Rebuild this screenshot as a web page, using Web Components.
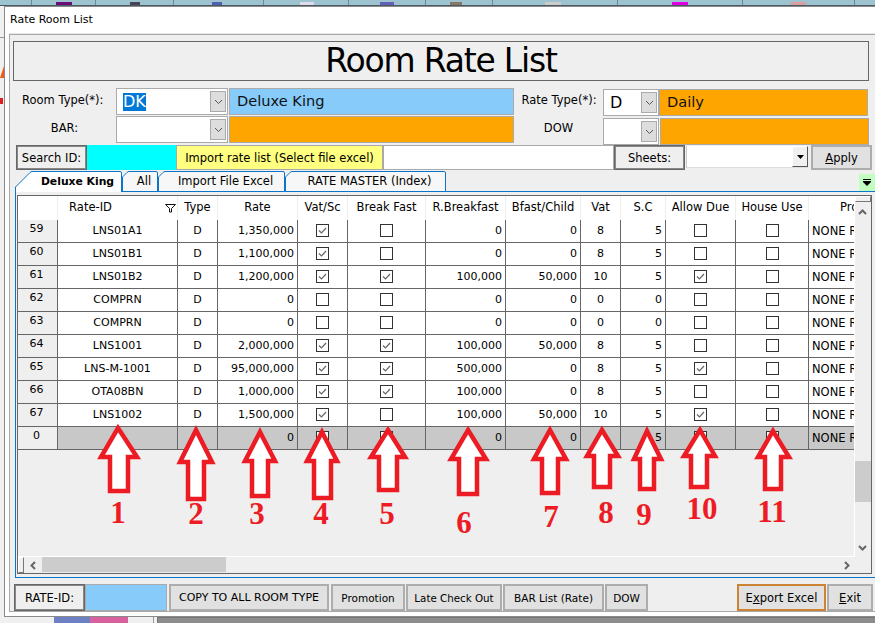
<!DOCTYPE html>
<html lang="en">
  <head>
    <meta charset="UTF-8" />
    <title>Rate Room List</title>
    <style>
      body {
        margin: 0;
        background: #f0f0f0;
      }
    </style>
  </head>

  <body>
    <rr-app>
      <rr-desktop></rr-desktop>
      <rr-window caption="Rate Room List">
        <rr-title>Room Rate List</rr-title>

        <rr-row style="height: 28px">
          <rr-label style="width: 94px; margin-left: 9px; text-align: left">Room Type(*):</rr-label>
          <rr-combo style="width: 112px; height: 27px" value="DK" selected></rr-combo>
          <rr-name style="width: 285px; height: 27px; margin-left: 1px; background: #87cbfb">Deluxe King</rr-name>
          <rr-label style="width: 88px; margin-left: 1px">Rate Type(*):</rr-label>
          <rr-combo style="width: 56px; height: 27px; margin-top: 1px" value="D"></rr-combo>
          <rr-name style="width: 209px; height: 27px; margin-top: 1px">Daily</rr-name>
        </rr-row>
        <rr-row style="height: 29px">
          <rr-label style="width: 103px">BAR:</rr-label>
          <rr-combo style="width: 112px; height: 27px"></rr-combo>
          <rr-name style="width: 285px; height: 27px; margin-left: 1px"></rr-name>
          <rr-label style="width: 89px">DOW</rr-label>
          <rr-combo style="width: 56px; height: 27px; margin-top: 2px"></rr-combo>
          <rr-name style="width: 209px; height: 27px; margin-top: 2px; margin-left: 1px"></rr-name>
        </rr-row>

        <rr-row style="height: 26px; padding-left: 3px">
          <rr-button kind="label" style="width: 71px; height: 25px">Search ID:</rr-button>
          <rr-name style="width: 89px; height: 25px; background: #00ffff; border-color: #00ffff"></rr-name>
          <rr-button kind="note" style="width: 207px; height: 25px">Import rate list (Select file excel)</rr-button>
          <rr-name style="width: 231px; height: 25px; background: #fff"></rr-name>
          <rr-button kind="label" style="width: 71px; height: 25px">Sheets:</rr-button>
          <rr-select style="width: 122px; height: 22px; margin: 1px 3px 0 1px"></rr-select>
          <rr-button style="width: 61px; height: 25px"><u>A</u>pply</rr-button>
        </rr-row>

        <rr-tabs>
          <rr-tab w="107" chamfer="15" active>Deluxe King</rr-tab>
          <rr-tab w="36" chamfer="5">All</rr-tab>
          <rr-tab w="127" chamfer="5">Import File Excel</rr-tab>
          <rr-tab w="161" chamfer="5">RATE MASTER (Index)</rr-tab>
        </rr-tabs>

        <rr-panel>
          <rr-grid></rr-grid>
        </rr-panel>

        <rr-row style="height: 27px; margin-top: 6px; padding-left: 1px">
          <rr-button kind="label" style="width: 71px; height: 27px">RATE-ID:</rr-button>
          <rr-name style="width: 82px; height: 27px; background: #87cbfb"></rr-name>
          <rr-button style="width: 160px; height: 27px; margin-left: 2px; font-size: 11px">COPY TO ALL ROOM TYPE</rr-button>
          <rr-button style="width: 74px; height: 27px; margin-left: 2px; font-size: 10.5px">Promotion</rr-button>
          <rr-button style="width: 96px; height: 27px; margin-left: 1px; font-size: 10.3px">Late Check Out</rr-button>
          <rr-button style="width: 101px; height: 27px; margin-left: 1px; font-size: 10.5px">BAR List (Rate)</rr-button>
          <rr-button style="width: 43px; height: 27px; margin-left: 1px; font-size: 10.5px">DOW</rr-button>
          <rr-button kind="default" style="width: 89px; height: 27px; margin-left: 89px">E<u>x</u>port Excel</rr-button>
          <rr-button style="width: 46px; height: 27px; margin-left: 1px"><u>E</u>xit</rr-button>
        </rr-row>
      </rr-window>
      <rr-arrows></rr-arrows>
    </rr-app>

    <script>
      // 共用的小工具：把 html 放进 open shadow root
      function mount(el, html) {
        const shadow = el.attachShadow({ mode: "open" });
        shadow.innerHTML = html;
        return shadow;
      }

      class RrApp extends HTMLElement {
        constructor() {
          super();
          mount(this, `
            <style>
              :host {
                display: block;
                position: relative;
                width: 875px;
                height: 623px;
                overflow: hidden;
                font: 11.5px "DejaVu Sans", sans-serif;
                color: #000;
              }
            </style>
            <slot></slot>`);
        }
      }

      // 窗口后面露出来的桌面，只有边上一点点
      class RrDesktop extends HTMLElement {
        constructor() {
          super();
          const lines = [31, 95, 173, 263, 348, 425, 492, 617, 742, 854];
          const blobs = [[56, 16, "#6a0f78"], [130, 10, "#445"], [212, 10, "#5060b0"], [300, 14, "#dde"], [380, 14, "#6060b8"], [450, 12, "#876"], [545, 16, "#ccc"], [672, 16, "#e000e0"], [791, 15, "#d8a0a0"]];
          mount(this, `
            <style>
              :host { display: block; position: absolute; inset: 0; }
            </style>
            <svg width="875" height="623">
              <rect width="875" height="5" fill="#9cc3cf" />
              <rect y="5" width="875" height="1" fill="#4a5a60" />
              ${lines.map((x) => `<rect x="${x}" width="1" height="5" fill="#6d8a94" />`).join("")}
              ${blobs.map((b) => `<rect x="${b[0]}" y="2" width="${b[1]}" height="3" fill="${b[2]}" />`).join("")}
              <rect y="37" width="4" height="1" fill="#999" />
              <path d="M0 78 L4 66 V78Z" fill="#f05a14" />
              <rect x="0" y="98" width="3" height="6" fill="#e02020" />
              <rect x="54" y="617" width="36" height="6" fill="#6d80c4" />
              <rect x="90" y="617" width="38" height="6" fill="#d9609f" />
              <rect x="153" y="617" width="1" height="6" fill="#999" />
              <rect x="157" y="617" width="718" height="6" fill="#777" />
              <rect x="158" y="618" width="717" height="5" fill="#8c8c8c" />
            </svg>`);
        }
      }

      class RrWindow extends HTMLElement {
        constructor() {
          super();
          mount(this, `
            <style>
              :host {
                display: block;
                position: relative;
                margin: 6px 0 0 4px;
                width: 890px;
                height: 611px;
                box-sizing: border-box;
                background: #fff;
                border: 1px solid #8a8a8a;
              }
              .cap { height: 27px; line-height: 25px; padding-left: 5px; font-size: 11px; }
              .frame {
                margin: 0 0 0 4px;
                height: 578px;
                box-sizing: border-box;
                background: #efefef;
                border: 1px solid #a8a8a8;
                padding: 6px 0 0 3px;
                box-shadow: 0 -1px 0 #e6e6e6;
              }
            </style>
            <div class="cap">${this.getAttribute("caption")}</div>
            <div class="frame"><slot></slot></div>`);
        }
      }

      class RrTitle extends HTMLElement {
        constructor() {
          super();
          mount(this, `
            <style>
              :host {
                display: block;
                box-sizing: border-box;
                width: 856px;
                height: 40px;
                margin-bottom: 7px;
                border: 1px solid #666;
                text-align: center;
                font-size: 33px;
                line-height: 37px;
                letter-spacing: -1.2px;
              }
            </style>
            <slot></slot>`);
        }
      }

      class RrRow extends HTMLElement {
        constructor() {
          super();
          mount(this, `
            <style>
              :host { display: flex; align-items: flex-start; }
            </style>
            <slot></slot>`);
        }
      }

      class RrLabel extends HTMLElement {
        constructor() {
          super();
          mount(this, `
            <style>
              :host {
                display: block;
                flex: none;
                height: 27px;
                line-height: 25px;
                text-align: center;
                white-space: nowrap;
              }
            </style>
            <slot></slot>`);
        }
      }

      class RrName extends HTMLElement {
        constructor() {
          super();
          mount(this, `
            <style>
              :host {
                display: block;
                flex: none;
                box-sizing: border-box;
                background: #ffa500;
                border: 1px solid #aaa;
                padding-left: 7px;
                font-size: 14.6px;
                line-height: 24px;
                color: #111;
              }
            </style>
            <slot></slot>`);
        }
      }

      class RrCombo extends HTMLElement {
        constructor() {
          super();
          const value = this.getAttribute("value") || "";
          const cls = this.hasAttribute("selected") ? "sel" : "";
          mount(this, `
            <style>
              :host {
                display: flex;
                flex: none;
                box-sizing: border-box;
                background: #fff;
                border: 1px solid #aaa;
                padding: 2px 1px 2px 6px;
                font-size: 16px;
                line-height: 21px;
              }
              .v { flex: 1; }
              .sel { background: #0078d7; color: #fff; display: inline-block; height: 18px; line-height: 18px; margin-top: 2px; }
              .btn {
                flex: none;
                width: 16px;
                box-sizing: border-box;
                background: #ddd;
                border: 1px solid #aaa;
                display: flex;
                align-items: center;
                justify-content: center;
              }
            </style>
            <div class="v"><span class="${cls}">${value}</span></div>
            <div class="btn">
              <svg width="9" height="6"><path d="M1 1 L4.5 4.5 L8 1" fill="none" stroke="#555" /></svg>
            </div>`);
        }
      }

      class RrButton extends HTMLElement {
        constructor() {
          super();
          mount(this, `
            <style>
              :host {
                display: flex;
                flex: none;
                align-items: center;
                justify-content: center;
                box-sizing: border-box;
                background: #e1e1e1;
                border: 1px solid #adadad;
                outline: 1px solid #adadad;
                outline-offset: -2px;
                white-space: nowrap;
              }
              :host([kind="label"]) {
                background: #efefef;
                border-color: #666;
                outline-color: #888;
              }
              :host([kind="note"]) {
                background: #ffff80;
                border-color: #a8a8a8;
                outline: none;
              }
              :host([kind="default"]) {
                border-color: #cc8434;
                outline-color: #cc8434;
              }
            </style>
            <slot></slot>`);
        }
      }

      class RrSelect extends HTMLElement {
        constructor() {
          super();
          mount(this, `
            <style>
              :host {
                display: flex;
                flex: none;
                justify-content: flex-end;
                box-sizing: border-box;
                background: #fff;
                border-bottom: 1px solid #ddd;
                border-left: 1px solid #ccc;
              }
              .btn {
                width: 16px;
                box-sizing: border-box;
                background: #f0f0f0;
                border: 1px solid #fff;
                border-right-color: #555;
                border-bottom-color: #555;
                display: flex;
                align-items: center;
                justify-content: center;
              }
            </style>
            <div class="btn">
              <svg width="7" height="4"><path d="M0 0 H7 L3.5 4Z" fill="#000" /></svg>
            </div>`);
        }
      }

      class RrTabs extends HTMLElement {
        constructor() {
          super();
          mount(this, `
            <style>
              :host { display: flex; position: relative; height: 20px; padding-left: 2px; }
              .more {
                position: absolute;
                left: 846px;
                top: 3px;
                width: 16px;
                height: 17px;
                background: #c0ffc0;
                display: flex;
                align-items: center;
                justify-content: center;
              }
            </style>
            <slot></slot>
            <div class="more">
              <svg width="8" height="8"><path d="M0 0 H8 V1 H0Z M0 2 H8 V3 L4 7 L0 3Z" fill="#000" /></svg>
            </div>`);
        }
      }

      class RrTab extends HTMLElement {
        constructor() {
          super();
          const w = +this.getAttribute("w");
          const c = +this.getAttribute("chamfer");
          const active = this.hasAttribute("active");
          const bottom = active ? 21 : 20;
          mount(this, `
            <style>
              :host {
                display: flex;
                position: relative;
                flex: none;
                box-sizing: border-box;
                width: ${w}px;
                height: 20px;
                align-items: center;
                justify-content: center;
                white-space: nowrap;
                padding-left: 8px;
              }
              :host([active]) { font-weight: bold; font-size: 10.8px; padding-left: 18px; }
              svg { position: absolute; left: 0; top: 0; }
              span { position: relative; }
            </style>
            <svg width="${w}" height="21">
              <path d="M0.5 ${bottom} V${c + 1} L${c} 1.5 Q${c + 1} 0.5 ${c + 2} 0.5 H${w - 2} Q${w - 0.5} 0.5 ${w - 0.5} 2 V${bottom}"
                fill="${active ? "#fff" : "#f7f7f7"}" stroke="#0b76c9" />
            </svg>
            <span><slot></slot></span>`);
        }
      }

      class RrPanel extends HTMLElement {
        constructor() {
          super();
          mount(this, `
            <style>
              :host {
                display: block;
                box-sizing: border-box;
                margin-left: 2px;
                width: 870px;
                height: 387px;
                border: 1px solid #0b76c9;
                border-right: none;
                padding: 3px 0 0 1px;
              }
            </style>
            <slot></slot>`);
        }
      }

      class RrCheck extends HTMLElement {
        constructor() {
          super();
          const tick = this.hasAttribute("checked")
            ? `<path d="M3 6.5 L5.5 9 L10 4" fill="none" stroke="#666" stroke-width="1.2" />`
            : "";
          mount(this, `
            <style>
              :host { display: block; width: 13px; height: 13px; }
              svg { display: block; }
            </style>
            <svg width="13" height="13">
              <rect x="0.5" y="0.5" width="12" height="12" fill="#fff" stroke="#333" />
              ${tick}
            </svg>`);
        }
      }

      const COLS = [40, 120, 40, 80, 50, 78, 80, 75, 40, 45, 70, 73, 46];
      const HEADS = ["", "Rate-ID", "Type", "Rate", "Vat/Sc", "Break Fast", "R.Breakfast", "Bfast/Child", "Vat", "S.C", "Allow Due", "House Use", "Promotion"];
      // no, id, type, rate, vatsc, breakfast, r.breakfast, bfast/child, vat, sc, allow due, house use
      const ROWS = [
        ["59", "LNS01A1", "D", "1,350,000", 1, 0, "0", "0", "8", "5", 0, 0],
        ["60", "LNS01B1", "D", "1,100,000", 1, 0, "0", "0", "8", "5", 0, 0],
        ["61", "LNS01B2", "D", "1,200,000", 1, 1, "100,000", "50,000", "10", "5", 1, 0],
        ["62", "COMPRN", "D", "0", 0, 0, "0", "0", "0", "0", 0, 0],
        ["63", "COMPRN", "D", "0", 0, 0, "0", "0", "0", "0", 0, 0],
        ["64", "LNS1001", "D", "2,000,000", 1, 1, "100,000", "50,000", "8", "5", 0, 0],
        ["65", "LNS-M-1001", "D", "95,000,000", 1, 1, "500,000", "0", "8", "5", 1, 0],
        ["66", "OTA08BN", "D", "1,000,000", 1, 1, "100,000", "0", "8", "5", 0, 0],
        ["67", "LNS1002", "D", "1,500,000", 1, 0, "100,000", "50,000", "10", "5", 1, 0],
        ["0", "", "", "0", 0, 0, "0", "0", "8", "5", 0, 0],
      ];
      const ALIGN = ["mid", "mid", "mid", "r", "x", "x", "r", "r", "mid", "r", "x", "x"];

      class RrGrid extends HTMLElement {
        constructor() {
          super();
          const heads = HEADS.map((h, i) => {
            if (i == 1) {
              return `<div class="h id"><span>${h}</span>
                <svg class="funnel" width="11" height="9"><path d="M0.5 0.5 H10.5 L6.5 4.5 V8 H4.5 V4.5Z" fill="none" stroke="#111" /></svg></div>`;
            }
            if (i == 12) return `<div class="h pr"><span>${h}</span></div>`;
            return `<div class="h">${h}</div>`;
          }).join("");
          const rows = ROWS.map((r, n) => {
            const last = n == ROWS.length - 1 ? "grey" : "";
            const cells = r.map((v, i) => {
              if (i == 0) return `<div class="c no">${v}</div>`;
              if (ALIGN[i] == "x") return `<div class="c m ${last}"><rr-check ${v ? "checked" : ""}></rr-check></div>`;
              return `<div class="c ${ALIGN[i]} ${last}">${v}</div>`;
            }).join("");
            return cells + `<div class="c none ${last}">NONE RATE</div>`;
          }).join("");
          mount(this, `
            <style>
              :host {
                display: grid;
                grid-template-columns: 837px 16px;
                grid-template-rows: 361px 16px;
                box-sizing: border-box;
                width: 855px;
                height: 379px;
                border: 1px solid #666;
                background: #efefef;
              }
              .view {
                overflow: hidden;
                border-bottom: 1px solid #fff;
                box-sizing: border-box;
                position: relative;
              }
              .view::after {
                content: "";
                position: absolute;
                right: 0;
                top: 0;
                bottom: 0;
                width: 1px;
                background: #fff;
              }
              .table {
                display: grid;
                grid-template-columns: ${COLS.map((c) => c + "px").join(" ")};
                grid-template-rows: 24px repeat(10, 23px);
              }
              .h {
                background: #fff;
                border-right: 1px solid #eee;
                line-height: 22px;
                text-align: center;
                white-space: nowrap;
                overflow: hidden;
                position: relative;
              }
              .id span { margin-right: 54px; }
              .funnel { position: absolute; left: 107px; top: 8px; }
              .pr { text-align: left; padding-left: 31px; }
              .c {
                box-sizing: border-box;
                background: #fff;
                border-right: 1px solid #666;
                border-bottom: 1px solid #666;
                font-size: 11px;
                line-height: 22px;
                white-space: nowrap;
                overflow: hidden;
              }
              .no { background: #efefef; text-align: center; line-height: 17px; padding-right: 2px; }
              .mid { text-align: center; }
              .r { text-align: right; padding-right: 3px; }
              .m { display: flex; justify-content: center; padding-top: 4px; }
              .none { padding-left: 3px; border-right: none; font-size: 11.5px; }
              .grey { background: #c8c8c8; }
              .vbar { position: relative; }
              .hbar { position: relative; grid-column: 1; }
              .knob { position: absolute; left: 0; top: 0; box-sizing: border-box; background: #f0f0f0; border: 1px solid #fff; border-right-color: #777; border-bottom-color: #777; }
              .thumb { position: absolute; background: #cccccc; }
              .ico { position: absolute; }
            </style>
            <div class="view"><div class="table">${heads}${rows}</div></div>
            <div class="vbar">
              <div class="knob" style="width: 16px; height: 6px"></div>
              <div class="thumb" style="left: 0; top: 265px; width: 16px; height: 41px"></div>
              <svg class="ico" style="left: 3px; top: 13px" width="9" height="6"><path d="M1 5 L4.5 1.5 L8 5" fill="none" stroke="#666" stroke-width="2" /></svg>
              <svg class="ico" style="left: 3px; top: 349px" width="9" height="6"><path d="M1 1 L4.5 4.5 L8 1" fill="none" stroke="#666" stroke-width="2" /></svg>
            </div>
            <div class="hbar">
              <div class="knob" style="width: 6px; height: 16px"></div>
              <div class="thumb" style="left: 24px; top: 0; width: 184px; height: 15px"></div>
              <svg class="ico" style="left: 12px; top: 4px" width="6" height="9"><path d="M5 1 L1.5 4.5 L5 8" fill="none" stroke="#666" stroke-width="2" /></svg>
              <svg class="ico" style="left: 826px; top: 4px" width="6" height="9"><path d="M1 1 L4.5 4.5 L1 8" fill="none" stroke="#666" stroke-width="2" /></svg>
            </div>`);
        }
      }

      // 红色箭头和数字是盖在截图上的标注
      // [tipX, tipY, headL, headR, shoulderY, shaftL, shaftR, bottomY]
      const ARROWS = [
        [118, 423, 98, 140, 459, 108, 130, 493],
        [196, 425, 177, 215, 464, 186, 206, 501],
        [260, 427, 242, 278, 463, 250, 270, 498],
        [322, 427, 304, 340, 463, 312, 333, 500],
        [388, 425, 368, 408, 459, 377, 399, 492],
        [468, 425, 448, 489, 461, 457, 479, 496],
        [550, 425, 531, 569, 461, 540, 560, 495],
        [602, 425, 584, 621, 458, 592, 612, 489],
        [647, 426, 631, 664, 461, 638, 656, 491],
        [700, 425, 681, 718, 458, 689, 709, 489],
        [773, 426, 755, 792, 459, 763, 783, 491],
      ];
      const NUMBERS = [
        ["1", 118, 523], ["2", 196, 524], ["3", 257, 524], ["4", 321, 524], ["5", 387, 524],
        ["6", 464, 533], ["7", 551, 527], ["8", 606, 523], ["9", 644, 525], ["10", 702, 519], ["11", 772, 522],
      ];

      class RrArrows extends HTMLElement {
        constructor() {
          super();
          const polys = ARROWS.map((a) => {
            const [t, ty, hl, hr, sy, l, r, b] = a;
            return `<polygon points="${t},${ty + 5} ${hr - 3},${sy - 2} ${r - 2},${sy - 2} ${r - 2},${b - 2} ${l + 2},${b - 2} ${l + 2},${sy - 2} ${hl + 3},${sy - 2}" />`;
          }).join("");
          const nums = NUMBERS.map((n) => `<text x="${n[1]}" y="${n[2]}">${n[0]}</text>`).join("");
          mount(this, `
            <style>
              :host { position: absolute; left: 0; top: 0; width: 875px; height: 623px; pointer-events: none; }
              polygon { fill: #fff; stroke: #ed1c24; stroke-width: 4.5; stroke-linejoin: miter; }
              text { font: bold 31px "Liberation Serif", serif; fill: #ed1c24; text-anchor: middle; }
            </style>
            <svg width="875" height="623">${polys}${nums}</svg>`);
        }
      }

      customElements.define("rr-app", RrApp);
      customElements.define("rr-desktop", RrDesktop);
      customElements.define("rr-window", RrWindow);
      customElements.define("rr-title", RrTitle);
      customElements.define("rr-row", RrRow);
      customElements.define("rr-label", RrLabel);
      customElements.define("rr-name", RrName);
      customElements.define("rr-combo", RrCombo);
      customElements.define("rr-button", RrButton);
      customElements.define("rr-select", RrSelect);
      customElements.define("rr-tabs", RrTabs);
      customElements.define("rr-tab", RrTab);
      customElements.define("rr-panel", RrPanel);
      customElements.define("rr-check", RrCheck);
      customElements.define("rr-grid", RrGrid);
      customElements.define("rr-arrows", RrArrows);
    </script>
  </body>
</html>
